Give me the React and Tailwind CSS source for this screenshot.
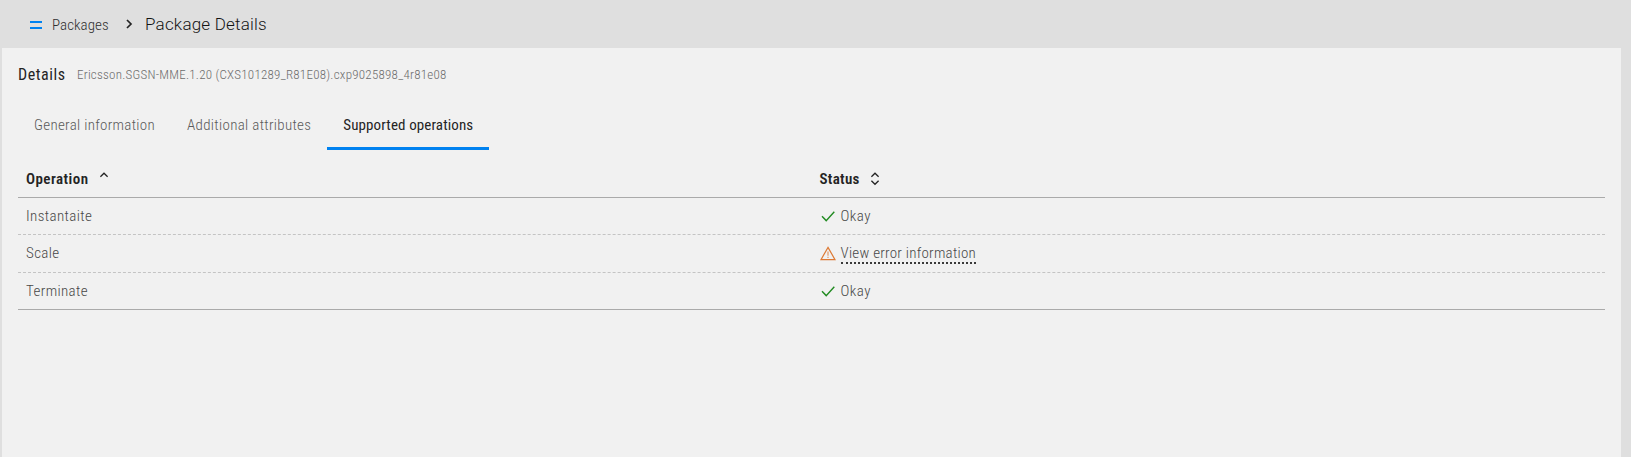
function Check() {
  return (
    <svg className="h-4 w-4 shrink-0" viewBox="0 0 16 16" fill="none" stroke="#228b22" strokeWidth="1.4">
      <path d="M2 8.2 6.2 12.6 14.3 3.7" />
    </svg>
  );
}

function Warning() {
  return (
    <svg className="h-4 w-4 shrink-0" viewBox="0 0 16 16" fill="none" stroke="#dd7a35" strokeWidth="1.2">
      <path d="M8 1.4 15 13.6H1Z" />
      <path d="M8 5.5v4.2M8 10.7v1.4" strokeWidth="1.5" strokeOpacity="0.6" />
    </svg>
  );
}

function SortIcon({ both }) {
  return (
    <svg className="h-4 w-4 shrink-0" viewBox="0 0 16 16" fill="none" stroke="#242424" strokeWidth="1.3">
      <path d="M4.4 4.7 8 1.2l3.6 3.5" />
      {both && <path d="M4.4 8.8 8 12.3l3.6-3.5" />}
    </svg>
  );
}

const rows = [
  { op: "Instantaite", ok: true, line: "h-[37px] border-b border-dashed border-[#c4c4c4]" },
  { op: "Scale", ok: false, line: "h-[38px] border-b border-dashed border-[#c4c4c4]" },
  { op: "Terminate", ok: true, line: "h-[37px] border-b border-[#aaaaaa]" },
];

const cell = "flex items-center pl-2 text-[15px] font-[350] text-[#484848]";

export default function App() {
  return (
    <div className="flex h-[457px] flex-col overflow-hidden bg-[#dfdfdf] font-['Roboto',sans-serif] whitespace-nowrap [font-stretch:75%]">
      <header className="flex h-12 shrink-0 items-center pl-[30px]">
        <svg className="mt-[2px] h-3 w-3" viewBox="0 0 12 12" fill="#0082f0">
          <path d="M0 2h12v2H0zM0 8h12v2H0z" />
        </svg>
        <span className="ml-[10px] w-[57px] pt-[2px] text-[15px] font-[350] tracking-[0.05px] text-[#303030]">Packages</span>
        <svg className="ml-4 h-3 w-2" viewBox="0 0 8 12" fill="none" stroke="#242424" strokeWidth="1.7">
          <path d="m2 2 4 4-4 4" />
        </svg>
        <span className="ml-3 pt-[2px] text-[17px] font-light tracking-[0.2px] text-[#141414] [font-stretch:90%]">
          Package Details
        </span>
      </header>
      <main className="mr-[10px] ml-[2px] grow bg-[#f1f1f1] px-4">
        <div className="flex h-[52px] items-center pt-[2px]">
          <h1 className="w-[47px] text-[16px] tracking-[0.55px] text-[#242424]">Details</h1>
          <span className="ml-3 text-[13px] font-[350] tracking-[0.24px] text-[#6c6c6c]">
            Ericsson.SGSN-MME.1.20 (CXS101289_R81E08).cxp9025898_4r81e08
          </span>
        </div>
        <nav className="flex h-[50px] text-[15px] font-[350] text-[#5a5a5a]">
          <div className="flex items-center px-4 tracking-[0.31px]">General information</div>
          <div className="flex items-center px-4 tracking-[0.31px]">Additional attributes</div>
          <div className="flex items-center border-b-[3px] border-[#0082f0] px-4 pt-[3px] font-normal tracking-[0.12px] text-[#242424]">
            Supported operations
          </div>
        </nav>
        <div className="grid h-12 grid-cols-2 border-b border-[#aaaaaa] pt-3 text-[15px] font-semibold text-[#242424]">
          <div className="flex items-center gap-[7px] pl-2">
            <span className="tracking-[0.45px]">Operation</span>
            <SortIcon />
          </div>
          <div className="flex items-center gap-[7px] pl-2">
            <span className="tracking-[0.3px]">Status</span>
            <SortIcon both />
          </div>
        </div>
        {rows.map((row) => (
          <div key={row.op} className={`grid grid-cols-2 ${row.line}`}>
            <div className={`${cell} tracking-[0.38px]`}>{row.op}</div>
            <div className={`${cell} gap-[5px]`}>
              {row.ok ? <Check /> : <Warning />}
              {row.ok ? (
                <span className="tracking-[0.5px]">Okay</span>
              ) : (
                <span className="-mt-px border-b-2 border-dotted border-[#3a3a3a] tracking-[0.26px]">
                  <span className="block h-5 leading-[23px]">View error information</span>
                </span>
              )}
            </div>
          </div>
        ))}
      </main>
    </div>
  );
}
